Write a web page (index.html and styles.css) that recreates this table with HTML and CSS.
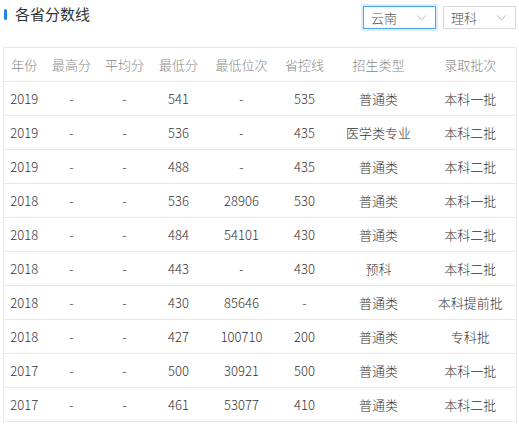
FILE: index.html
```html
<!DOCTYPE html>
<html lang="zh">
<head>
<meta charset="utf-8">
<link rel="stylesheet" href="styles.css">
</head>
<body>
<div class="page">
  <div class="head">
    <div class="title"><span class="bar"></span><span class="title-text">各省分数线</span></div>
    <div class="filters">
      <div class="select active"><span>云南</span><svg class="chev" width="9" height="6" viewBox="0 0 9 6"><path d="M0.5 0.5 L4.5 5 L8.5 0.5" fill="none" stroke="#bbb" stroke-width="1"/></svg></div>
      <div class="select"><span>理科</span><svg class="chev" width="9" height="6" viewBox="0 0 9 6"><path d="M0.5 0.5 L4.5 5 L8.5 0.5" fill="none" stroke="#bbb" stroke-width="1"/></svg></div>
    </div>
  </div>
  <table class="scores">
    <colgroup>
      <col class="c1"><col class="c2"><col class="c3"><col class="c4"><col class="c5"><col class="c6"><col class="c7"><col class="c8">
    </colgroup>
    <thead>
      <tr><th>年份</th><th>最高分</th><th>平均分</th><th>最低分</th><th>最低位次</th><th>省控线</th><th>招生类型</th><th>录取批次</th></tr>
    </thead>
    <tbody>
      <tr><td>2019</td><td>-</td><td>-</td><td>541</td><td>-</td><td>535</td><td>普通类</td><td>本科一批</td></tr>
      <tr><td>2019</td><td>-</td><td>-</td><td>536</td><td>-</td><td>435</td><td>医学类专业</td><td>本科二批</td></tr>
      <tr><td>2019</td><td>-</td><td>-</td><td>488</td><td>-</td><td>435</td><td>普通类</td><td>本科二批</td></tr>
      <tr><td>2018</td><td>-</td><td>-</td><td>536</td><td>28906</td><td>530</td><td>普通类</td><td>本科一批</td></tr>
      <tr><td>2018</td><td>-</td><td>-</td><td>484</td><td>54101</td><td>430</td><td>普通类</td><td>本科二批</td></tr>
      <tr><td>2018</td><td>-</td><td>-</td><td>443</td><td>-</td><td>430</td><td>预科</td><td>本科二批</td></tr>
      <tr><td>2018</td><td>-</td><td>-</td><td>430</td><td>85646</td><td>-</td><td>普通类</td><td>本科提前批</td></tr>
      <tr><td>2018</td><td>-</td><td>-</td><td>427</td><td>100710</td><td>200</td><td>普通类</td><td>专科批</td></tr>
      <tr><td>2017</td><td>-</td><td>-</td><td>500</td><td>30921</td><td>500</td><td>普通类</td><td>本科一批</td></tr>
      <tr><td>2017</td><td>-</td><td>-</td><td>461</td><td>53077</td><td>410</td><td>普通类</td><td>本科二批</td></tr>
    </tbody>
  </table>
</div>
</body>
</html>
```
FILE: styles.css
```css
html, body {
  margin: 0;
  padding: 0;
  background: #fff;
}
body {
  font-family: "Noto Sans CJK SC", "Noto Sans", sans-serif;
  color: #333;
  font-size: 13px;
  font-weight: 300;
}
.page {
  padding: 0 3px;
}
.head {
  height: 47px;
  display: flex;
  justify-content: space-between;
  align-items: flex-start;
}
.title {
  display: flex;
  align-items: center;
  padding-top: 3px;
  padding-left: 1px;
}
.bar {
  width: 3px;
  height: 11px;
  border-radius: 2px;
  background: #1e88e5;
  margin-right: 8px;
}
.title-text {
  font-size: 15px;
  line-height: 22px;
  color: #333;
  font-weight: 400;
}
.filters {
  display: flex;
  gap: 7px;
  padding-top: 6px;
}
.select {
  box-sizing: border-box;
  width: 73px;
  height: 23px;
  border: 1px solid #d9d9d9;
  display: flex;
  align-items: center;
  justify-content: space-between;
  padding: 0 9px 0 7px;
  font-size: 13px;
  color: #555;
  background: #fff;
}
.select.active {
  border-color: #4aa3f5;
  box-shadow: 0 0 0 2px #dceefd;
}
.chev {
  display: block;
}
.scores {
  width: 513px;
  border-collapse: collapse;
  table-layout: fixed;
  border: 1px solid #e8e8e8;
}
.c1 { width: 41px; }
.c2 { width: 54px; }
.c3 { width: 52px; }
.c4 { width: 56px; }
.c5 { width: 70px; }
.c6 { width: 56px; }
.c7 { width: 92px; }
.c8 { width: 92px; }
.scores th, .scores td {
  height: 33px;
  padding: 0;
  text-align: center;
  border-bottom: 1px solid #e8e8e8;
  font-weight: 300;
  white-space: nowrap;
  line-height: 18px;
}
.scores th {
  color: #888;
}
.scores td {
  color: #333;
}
```
